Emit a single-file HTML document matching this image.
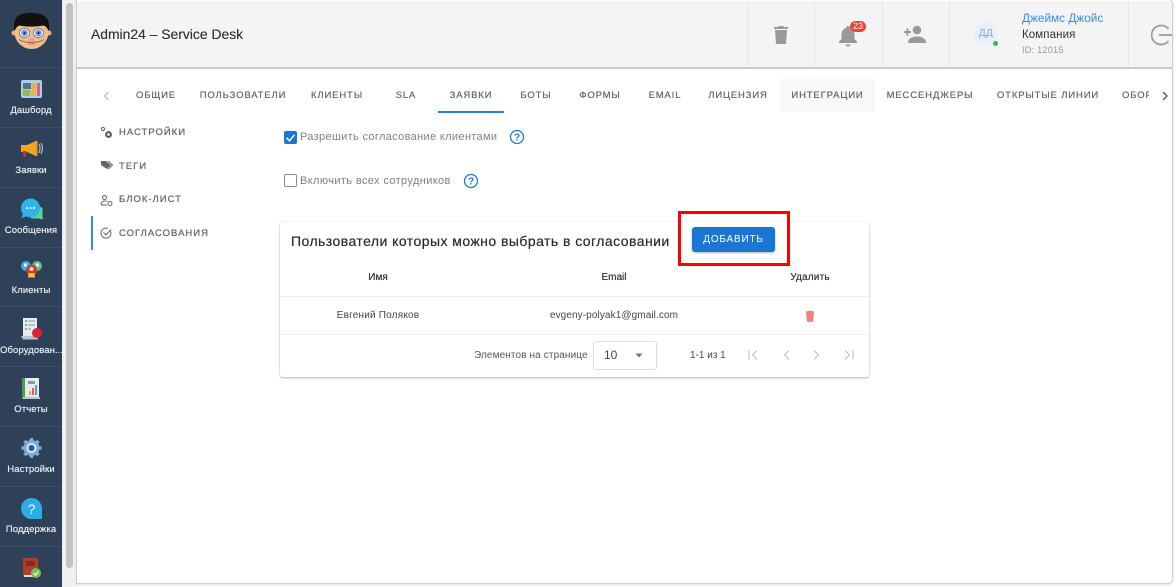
<!DOCTYPE html>
<html lang="ru"><head><meta charset="utf-8"><title>Admin24</title>
<style>
html,body{margin:0;padding:0;background:#fff}
body{width:1176px;height:587px;position:relative;overflow:hidden;font-family:"Liberation Sans","Noto Sans CJK SC",sans-serif;filter:blur(.3px)}
.a{position:absolute;white-space:nowrap}
.nl{position:absolute;left:0;width:62px;text-align:center;color:#e8ecf0;font-size:9.5px;line-height:12px;letter-spacing:.1px;overflow:hidden;white-space:nowrap;text-shadow:0 0 .5px #e8ecf0}
.sep{position:absolute;left:0;width:62px;height:1px;background:#3e5069}
.ico{position:absolute;left:0;top:0}
.t{position:absolute;top:90px;height:12px;line-height:12px;font-size:9.5px;letter-spacing:.85px;color:#666;text-align:center;white-space:nowrap;text-shadow:0 0 .5px #666}
.s{position:absolute;left:119px;font-size:9.5px;line-height:12px;letter-spacing:1px;color:#666;white-space:nowrap;text-shadow:0 0 .6px #666}
.v{position:absolute;top:0;width:1px;height:67px;background:#e6e6e6}
.row{position:absolute;left:280px;width:589px;height:1px;background:#efefef}
.h{font-size:10px;line-height:12px;color:#333;text-align:center;width:80px;text-shadow:0 0 .4px #333}
</style></head><body>

<div class="a" style="left:0;top:0;width:62px;height:587px;background:#2f4159"></div>
<div class="a" style="left:62px;top:0;width:15px;height:587px;background:#f0f0f0"></div>
<div class="a" style="left:66px;top:3px;width:7px;height:565px;background:#c2c2c2;border-radius:4px"></div>
<div class="sep" style="top:67px"></div><div class="sep" style="top:127px"></div><div class="sep" style="top:187px"></div><div class="sep" style="top:247px"></div><div class="sep" style="top:306px"></div><div class="sep" style="top:366px"></div><div class="sep" style="top:426px"></div><div class="sep" style="top:486px"></div><div class="sep" style="top:546px"></div>

<svg class="ico" width="62" height="587" viewBox="0 0 62 587">
<!-- face -->
<circle cx="14" cy="33" r="2.5" fill="#e9b27e"/><circle cx="49" cy="33" r="2.5" fill="#e9b27e"/>
<ellipse cx="31.5" cy="32" rx="17" ry="17" fill="#f0bd88"/>
<path d="M14.5 31C12.500 20 17 14 25 13.5 32 12 47 13 48.500 22 49.500 25 49 28 48.500 31 47 27 45.500 26 43 25.500 36 27 26 27 20 25.500 17 26 16 28 14.500 31Z" fill="#14100f"/>
<ellipse cx="24.5" cy="33" rx="5.200" ry="4.500" fill="#eef4fb" stroke="#5a6585" stroke-width=".7"/><ellipse cx="38.5" cy="33" rx="5.200" ry="4.500" fill="#eef4fb" stroke="#5a6585" stroke-width=".7"/>
<circle cx="24.5" cy="33" r="3.200" fill="#5b9ae2"/><circle cx="38.5" cy="33" r="3.200" fill="#5b9ae2"/>
<circle cx="24.5" cy="33" r="1" fill="#123"/><circle cx="38.5" cy="33" r="1" fill="#123"/>
<path d="M29 38.500h5l1 3h-7Z" fill="#ed9c86"/><path d="M19 39.500c6 4 19 4 25 0" fill="none" stroke="#8d6548" stroke-width="1"/><path d="M28 44h7" stroke="#e2786e" stroke-width="1.200"/>
<!-- dashboard -->
<rect x="21" y="80" width="21" height="18" rx="2" fill="#a8d0ea"/><rect x="23" y="83" width="8" height="6" fill="#5b6f7f"/><rect x="23" y="90" width="7" height="6" fill="#8ebd43"/><rect x="31" y="90" width="5" height="6" fill="#efb23e"/><rect x="32" y="83" width="4" height="6" fill="#f3a646"/><rect x="37" y="83" width="3" height="13" fill="#e85a7b"/>
<!-- megaphone -->
<path d="M21 145h6l9-4v15l-9-4h-6Z" fill="#f6a51e"/><rect x="35" y="141" width="2.5" height="15" fill="#e9a020"/><path d="M23 151h3.500l-1 6h-2Z" fill="#c9362f"/><path d="M39 144q2 4.500 0 9M41 143q3 5.500 0 11" fill="none" stroke="#a9bac6" stroke-width="1.200"/>
<!-- chat -->
<path d="M31 207h9q2.500 0 2.500 2.500v7l.5 3-4-1h-8Z" fill="#5fcf9c"/><circle cx="30.5" cy="208" r="9.500" fill="#2fb4e8"/><path d="M23 213l-1.500 5 6-2Z" fill="#2fb4e8"/><circle cx="27" cy="208" r="1" fill="#fff"/><circle cx="30.5" cy="208" r="1" fill="#fff"/><circle cx="34" cy="208" r="1" fill="#fff"/>
<!-- clients -->
<circle cx="26" cy="266" r="5" fill="#2fb4e8"/><circle cx="37" cy="266" r="5" fill="#62c08f"/><circle cx="31.5" cy="270" r="5.500" fill="#d8352f"/><path d="M28.500 273h6l.5 4.500h-7Z" fill="#f3c43c"/><circle cx="25.500" cy="265" r="1.700" fill="#dff"/><circle cx="37.500" cy="265" r="1.700" fill="#dfd"/><circle cx="31.5" cy="269" r="2" fill="#fdd"/>
<!-- equipment -->
<path d="M23 318h14v18H23Z" fill="#e4ebf2"/><path d="M21 336h17v3.500H23Z" fill="#b6c6d4"/><path d="M25 321h2M25 325h2M25 329h2" stroke="#48a55a" stroke-width="1.500"/><path d="M28 321h7M28 325h7M28 329h3" stroke="#8b9aa8" stroke-width="1"/><circle cx="37" cy="333" r="5" fill="#e0202e"/>
<!-- reports -->
<rect x="22" y="378" width="5" height="21" fill="#4c9c46"/><path d="M25 378h14v19H25Z" fill="#e4ebf2"/><path d="M23 397h17v2H23Z" fill="#b9cad6"/><rect x="28" y="381" width="7" height="3" fill="#8d9aa4"/><rect x="29" y="391" width="2" height="4" fill="#f2a33b"/><rect x="32" y="388" width="2" height="7" fill="#e65f3f"/><rect x="35" y="385" width="2" height="10" fill="#4d9fd8"/>
<!-- settings -->
<g fill="#7badde"><circle cx="31.5" cy="448" r="8"/><g stroke="#7badde" stroke-width="3.500"><path d="M31.5 438v20M21.500 448h20M24.500 441l14 14M38.500 441l-14 14"/></g></g><circle cx="31.5" cy="448" r="5" fill="#dfe8f0"/><circle cx="31.5" cy="448" r="3" fill="#2f5c8e"/>
<!-- support -->
<path d="M31.5 498a10.500 10.500 0 1 0 0 21h10.500v-10.500a10.500 10.500 0 0 0-10.500-10.500Z" fill="#29aee8"/>
<text x="31.5" y="514" font-family="Liberation Sans" font-size="14" fill="#fff" text-anchor="middle">?</text>
<!-- book -->
<rect x="23" y="558" width="15" height="19" rx="1" fill="#b33c2c"/><path d="M26 561h9v5h-9Z" fill="#8a2a1e"/><rect x="24" y="575" width="14" height="2" fill="#ddd"/><circle cx="36" cy="573" r="5" fill="#76c04e"/><path d="M33.500 573l2 2 3-3.500" fill="none" stroke="#fff" stroke-width="1.200"/>
</svg>

<div class="nl" style="top:104.500px">Дашборд</div>
<div class="nl" style="top:164.500px">Заявки</div>
<div class="nl" style="top:224.500px">Сообщения</div>
<div class="nl" style="top:284.500px">Клиенты</div>
<div class="nl" style="top:344.500px">Оборудован...</div>
<div class="nl" style="top:403.500px">Отчеты</div>
<div class="nl" style="top:463.500px">Настройки</div>
<div class="nl" style="top:523.500px">Поддержка</div>

<!-- window -->
<div class="a" style="left:77px;top:0;width:1095px;height:583px;background:#fff;box-shadow:0 0 0 1px #cfcfcf,0 1px 2px 1px #ddd;border-radius:0 4px 4px 0"></div>
<div class="a" style="left:77px;top:1px;width:1095px;height:66px;background:#f4f4f4;border-bottom:2px solid #c9c9c9;overflow:hidden;border-radius:0 4px 0 0">
<div class="v" style="left:670px"></div><div class="v" style="left:737px"></div><div class="v" style="left:805px"></div><div class="v" style="left:872px"></div><div class="v" style="left:1051px"></div>
<div class="a" style="left:14px;top:24px;font-size:13.900px;line-height:18px;color:#333;text-shadow:0 0 .3px #333">Admin24 – Service Desk</div>
<svg class="a" style="left:696px;top:24px" width="16" height="19" viewBox="0 0 16 19"><path d="M2 5h12l-1 14H3ZM1 2h4l1-1h4l1 1h4v2H1Z" fill="#999"/></svg>
<svg class="a" style="left:759px;top:22px" width="24" height="24" viewBox="0 0 24 24"><path d="M12 3c-1 0-2 1-2 2-3 1-4.500 3.500-4.500 7v4L3 18.500V20h18v-1.500L18.500 16v-4c0-3.500-1.500-6-4.500-7 0-1-1-2-2-2Z" fill="#999"/><path d="M9.500 21.500h5a2.500 2 0 0 1-5 0Z" fill="#999"/></svg>
<div class="a" style="left:773px;top:20px;width:16px;height:11px;border-radius:6px;background:#f33f3a;color:#fff;font-size:9px;line-height:11px;text-align:center">23</div>
<svg class="a" style="left:826px;top:23px" width="24" height="20" viewBox="0 0 24 20"><circle cx="14" cy="6" r="4.300" fill="#999"/><path d="M5 19c0-5 5-6.500 9-6.500s9 1.500 9 6.500Z" fill="#999"/><path d="M1 8h7M4.500 4.500v7" stroke="#999" stroke-width="2"/></svg>
<div class="a" style="left:897px;top:21px;width:24px;height:24px;border-radius:50%;background:#e8f0fd;color:#7aa9e6;font-size:10px;line-height:24px;text-align:center;letter-spacing:.3px">ДД</div>
<div class="a" style="left:916px;top:40px;width:5px;height:5px;border-radius:50%;background:#3fb54a"></div>
<div class="a" style="left:945px;top:10px;font-size:11.800px;line-height:14px;color:#3f8ae0">Джеймс Джойс</div>
<div class="a" style="left:945px;top:27px;font-size:11.500px;line-height:14px;color:#333;letter-spacing:.1px">Компания</div>
<div class="a" style="left:945px;top:43px;font-size:9.200px;line-height:12px;color:#999;letter-spacing:.2px">ID: 12015</div>
<svg class="a" style="left:1074px;top:23px" width="22" height="22" viewBox="0 0 22 22"><path d="M17.500 5A9.500 9.500 0 1 0 17.500 17" fill="none" stroke="#999" stroke-width="1.700"/><path d="M8 11h14" fill="none" stroke="#999" stroke-width="1.700"/></svg>
</div>

<!-- tabs -->
<div class="a" style="left:780px;top:79px;width:95px;height:33px;background:#f8f8f8"></div>
<svg class="a" style="left:101px;top:90px" width="12" height="12" viewBox="0 0 12 12"><path d="M7.500 2L3.500 6l4 4" fill="none" stroke="#bbb" stroke-width="1.200"/></svg>
<div class="t" style="left:125px;width:62px">ОБЩИЕ</div>
<div class="t" style="left:198px;width:90px">ПОЛЬЗОВАТЕЛИ</div>
<div class="t" style="left:303px;width:68px">КЛИЕНТЫ</div>
<div class="t" style="left:380px;width:52px">SLA</div>
<div class="t" style="left:438px;width:66px">ЗАЯВКИ</div>
<div class="a" style="left:438px;top:111px;width:66px;height:1.500px;background:#2f7fd8"></div>
<div class="t" style="left:512px;width:48px">БОТЫ</div>
<div class="t" style="left:570px;width:60px">ФОРМЫ</div>
<div class="t" style="left:640px;width:50px">EMAIL</div>
<div class="t" style="left:700px;width:76px">ЛИЦЕНЗИЯ</div>
<div class="t" style="left:780px;width:95px">ИНТЕГРАЦИИ</div>
<div class="t" style="left:880px;width:100px">МЕССЕНДЖЕРЫ</div>
<div class="t" style="left:990px;width:116px">ОТКРЫТЫЕ ЛИНИИ</div>
<div class="t" style="left:1122px;width:27px;overflow:hidden;text-align:left">ОБОРУДОВАНИЕ</div>
<svg class="a" style="left:1159px;top:90px" width="12" height="12" viewBox="0 0 12 12"><path d="M4 2l4 4-4 4" fill="none" stroke="#555" stroke-width="1.300"/></svg>

<!-- side menu -->
<svg class="a" style="left:100px;top:126px" width="13" height="13" viewBox="0 0 13 13"><circle cx="3" cy="3" r="1.600" fill="none" stroke="#666" stroke-width="1.100"/><circle cx="8.5" cy="8.5" r="2.400" fill="none" stroke="#555" stroke-width="2"/></svg>
<div class="s" style="top:126.500px">НАСТРОЙКИ</div>
<svg class="a" style="left:100px;top:159px" width="13" height="12" viewBox="0 0 13 12"><path d="M1 2h5l5 4-4 4-6-4Z" fill="#666"/><path d="M8 2l4.500 4-4 4" fill="none" stroke="#666"/></svg>
<div class="s" style="top:160.500px">ТЕГИ</div>
<svg class="a" style="left:100px;top:194px" width="13" height="13" viewBox="0 0 13 13" fill="none" stroke="#666" stroke-width="1"><circle cx="4.500" cy="3.500" r="2"/><path d="M1 11c0-3 2-4 4-4s2 .5 2 .5M1 11h6"/><circle cx="10" cy="9.500" r="2"/></svg>
<div class="s" style="top:193.500px">БЛОК-ЛИСТ</div>
<div class="a" style="left:91px;top:216px;width:1.500px;height:34px;background:#3f86dd"></div>
<svg class="a" style="left:100px;top:227px" width="12" height="12" viewBox="0 0 12 12" fill="none" stroke="#666" stroke-width="1"><path d="M10.500 4A5 5 0 1 1 8 1.500"/><path d="M3.500 5.500l2.500 2.500 5-5.500"/></svg>
<div class="s" style="top:227.500px">СОГЛАСОВАНИЯ</div>

<!-- checkboxes -->
<div class="a" style="left:284px;top:131px;width:13px;height:13px;background:#1976d2;border-radius:2px"></div>
<svg class="a" style="left:284px;top:131px" width="13" height="13" viewBox="0 0 13 13"><path d="M2.500 6.800l3 3 5-6" fill="none" stroke="#fff" stroke-width="1.500"/></svg>
<div class="a" style="left:300px;top:130px;font-size:11px;line-height:14px;color:#808080;letter-spacing:.34px">Разрешить согласование клиентами</div>
<svg class="a" style="left:509px;top:129px" width="16" height="16" viewBox="0 0 16 16"><circle cx="8" cy="8" r="6.500" fill="none" stroke="#1f78d8" stroke-width="1.300"/><text x="8" y="11.500" font-family="Liberation Sans" font-size="10" font-weight="bold" fill="#1f78d8" text-anchor="middle">?</text></svg>
<div class="a" style="left:284px;top:174px;width:11px;height:11px;border:1.300px solid #8a8a8a;border-radius:2px"></div>
<div class="a" style="left:300px;top:174px;font-size:11px;line-height:14px;color:#808080;letter-spacing:.38px">Включить всех сотрудников</div>
<svg class="a" style="left:463px;top:173px" width="16" height="16" viewBox="0 0 16 16"><circle cx="8" cy="8" r="6.500" fill="none" stroke="#1f78d8" stroke-width="1.300"/><text x="8" y="11.500" font-family="Liberation Sans" font-size="10" font-weight="bold" fill="#1f78d8" text-anchor="middle">?</text></svg>

<!-- card -->
<div class="a" style="left:280px;top:222px;width:589px;height:155px;background:#fff;border-radius:3px;box-shadow:0 1px 2px rgba(0,0,0,.28),0 0 2px rgba(0,0,0,.07)"></div>
<div class="a" style="left:291px;top:233px;font-size:14px;line-height:17px;color:#2b2b2b;letter-spacing:.45px;text-shadow:0 0 .4px #2b2b2b">Пользователи которых можно выбрать в согласовании</div>
<div class="a" style="left:692px;top:227px;width:83px;height:25px;background:#1976d2;border-radius:3px;box-shadow:0 1px 2px rgba(0,0,0,.3)"></div>
<div class="a" style="left:692px;top:227px;width:83px;height:25px;color:#e5f0fb;font-size:10px;line-height:25px;text-align:center;letter-spacing:.8px;text-shadow:0 0 .3px #e5f0fb">ДОБАВИТЬ</div>
<div class="a" style="left:678px;top:211px;width:106px;height:49px;border:3px solid #f00"></div>
<div class="a h" style="left:338px;top:271.500px">Имя</div>
<div class="a h" style="left:574px;top:271.500px">Email</div>
<div class="a h" style="left:770px;top:271.500px;letter-spacing:.2px">Удалить</div>
<div class="row" style="top:296px"></div><div class="row" style="top:334px"></div>
<div class="a" style="left:328px;top:309.500px;width:100px;text-align:center;font-size:10px;line-height:12px;color:#444;letter-spacing:.2px">Евгений Поляков</div>
<div class="a" style="left:534px;top:309.500px;width:160px;text-align:center;font-size:10px;line-height:12px;color:#444;letter-spacing:.1px">evgeny-polyak1@gmail.com</div>
<svg class="a" style="left:805px;top:310px" width="10" height="12" viewBox="0 0 10 12"><path d="M1.500 3h7l-.6 8.500H2.100ZM1 1.500h2.500l.5-.5h2l.5.500H9v1H1Z" fill="#f0837d" stroke="#e8625c" stroke-width=".4"/></svg>
<div class="a" style="left:474px;top:349.500px;font-size:10px;line-height:12px;color:#555;letter-spacing:.12px">Элементов на странице</div>
<div class="a" style="left:593px;top:341px;width:62px;height:27px;border:1px solid #ddd;border-radius:3px"></div>
<div class="a" style="left:604px;top:348px;font-size:12px;line-height:15px;color:#444">10</div>
<svg class="a" style="left:635px;top:353px" width="8" height="5" viewBox="0 0 8 5"><path d="M.5.500h7L4 4.500Z" fill="#777"/></svg>
<div class="a" style="left:690px;top:349.500px;font-size:10px;line-height:12px;color:#444">1-1 из 1</div>
<svg class="a" style="left:745px;top:349px" width="112" height="12" viewBox="0 0 112 12" fill="none" stroke="#bbb" stroke-width="1"><path d="M4 1.500v9M12 1.500L7.500 6l4.500 4.500M44 1.500L39.500 6l4.500 4.500M69 1.500L73.500 6 69 10.500M100 1.500L104.500 6 100 10.500M108 1.500v9"/></svg>
</body></html>
